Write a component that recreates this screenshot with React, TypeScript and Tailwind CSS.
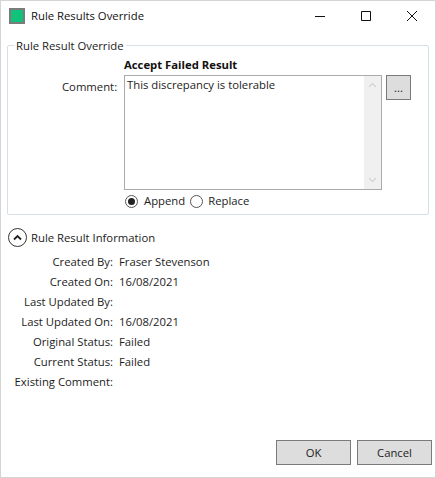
const infoRows = [
  { label: "Created By:", value: "Fraser Stevenson" },
  { label: "Created On:", value: "16/08/2021" },
  { label: "Last Updated By:", value: "" },
  { label: "Last Updated On:", value: "16/08/2021" },
  { label: "Original Status:", value: "Failed" },
  { label: "Current Status:", value: "Failed" },
  { label: "Existing Comment:", value: "" },
];

function Radio({ checked }: { checked?: boolean }) {
  return (
    <span className="flex h-[13px] w-[13px] items-center justify-center rounded-full border border-[#555555] bg-white">
      {checked && <span className="h-[7px] w-[7px] rounded-full bg-[#222222]" />}
    </span>
  );
}

export default function App() {
  return (
    <div
      className="flex h-[478px] w-[436px] flex-col border border-[#d4d4d4] bg-white text-[11.3px] leading-[16px] text-[#1c1c1c]"
      style={{ fontFamily: "'Open Sans', sans-serif" }}
    >
      {/* title bar */}
      <div className="flex h-[30px] shrink-0 items-center pl-[8px]">
        <span className="h-[16px] w-[16px] border-[2px] border-[#7b7b7b] bg-[#10c27c]" />
        <span className="ml-[6px] text-[#111111]">Rule Results Override</span>
        <div className="ml-auto flex items-center">
          <svg width="46" height="30" viewBox="0 0 46 30"><path d="M18 15.500h10" stroke="#111" fill="none" /></svg>
          <svg width="46" height="30" viewBox="0 0 46 30"><path d="M18.500 10.500h9v9h-9z" stroke="#111" fill="none" /></svg>
          <svg width="46" height="30" viewBox="0 0 46 30"><path d="M18 10l10 10M28 10L18 20" stroke="#111" fill="none" /></svg>
        </div>
      </div>

      {/* override group */}
      <div className="relative mx-[6px] mt-[14px] h-[170px] shrink-0 rounded-[2px] border border-[#d5dfe5] pl-[116px] pt-[11px]">
        <span className="absolute left-[6px] top-[-8px] bg-white px-[2px] text-[#222222]">Rule Result Override</span>
        <span className="absolute left-[54px] top-[33px]">Comment:</span>
        <div className="font-bold text-[#111111]">Accept Failed Result</div>
        <div className="mt-[2px] flex items-start gap-[4px]">
          <div className="flex h-[115px] w-[258px] border border-[#ababab]">
            <div className="flex-1 px-[2px] pt-[1px]">This discrepancy is tolerable</div>
            <div className="flex w-[17px] flex-col items-center justify-between bg-[#f0f0f0] py-[6px]">
              <svg width="9" height="6" viewBox="0 0 9 6"><path d="M1 5l3.500-3.500L8 5" stroke="#d6d6d6" strokeWidth="1.500" fill="none" /></svg>
              <svg width="9" height="6" viewBox="0 0 9 6"><path d="M1 1l3.500 3.500L8 1" stroke="#d6d6d6" strokeWidth="1.500" fill="none" /></svg>
            </div>
          </div>
          <div className="flex h-[25px] w-[25px] items-center justify-center border border-[#7a7a7a] bg-[#dddddd]">...</div>
        </div>
        <div className="mt-[3px] flex h-[16px] items-center pl-[1px]">
          <Radio checked />
          <span className="ml-[6px]">Append</span>
          <span className="ml-[5px]"><Radio /></span>
          <span className="ml-[5px]">Replace</span>
        </div>
      </div>

      {/* information expander */}
      <div className="mt-[13px] flex items-center pl-[7px]">
        <span className="flex h-[19px] w-[19px] items-center justify-center rounded-full border border-[#333333]">
          <svg width="9" height="7" viewBox="0 0 9 7"><path d="M1 5.500l3.500-3.500L8 5.500" stroke="#222" strokeWidth="1.800" fill="none" /></svg>
        </span>
        <span className="ml-[4px]">Rule Result Information</span>
      </div>
      <div className="mt-[5px] flex flex-col">
        {infoRows.map((row) => (
          <div key={row.label} className="flex h-[20px] items-center">
            <span className="w-[112px] text-right">{row.label}</span>
            <span className="ml-[6px]">{row.value}</span>
          </div>
        ))}
      </div>

      {/* footer buttons */}
      <div className="mt-auto mb-[12px] flex justify-end gap-[6px] pr-[3px]">
        <button className="h-[25px] w-[75px] border border-[#7a7a7a] bg-[#dddddd]">OK</button>
        <button className="h-[25px] w-[75px] border border-[#7a7a7a] bg-[#dddddd]">Cancel</button>
      </div>
    </div>
  );
}
